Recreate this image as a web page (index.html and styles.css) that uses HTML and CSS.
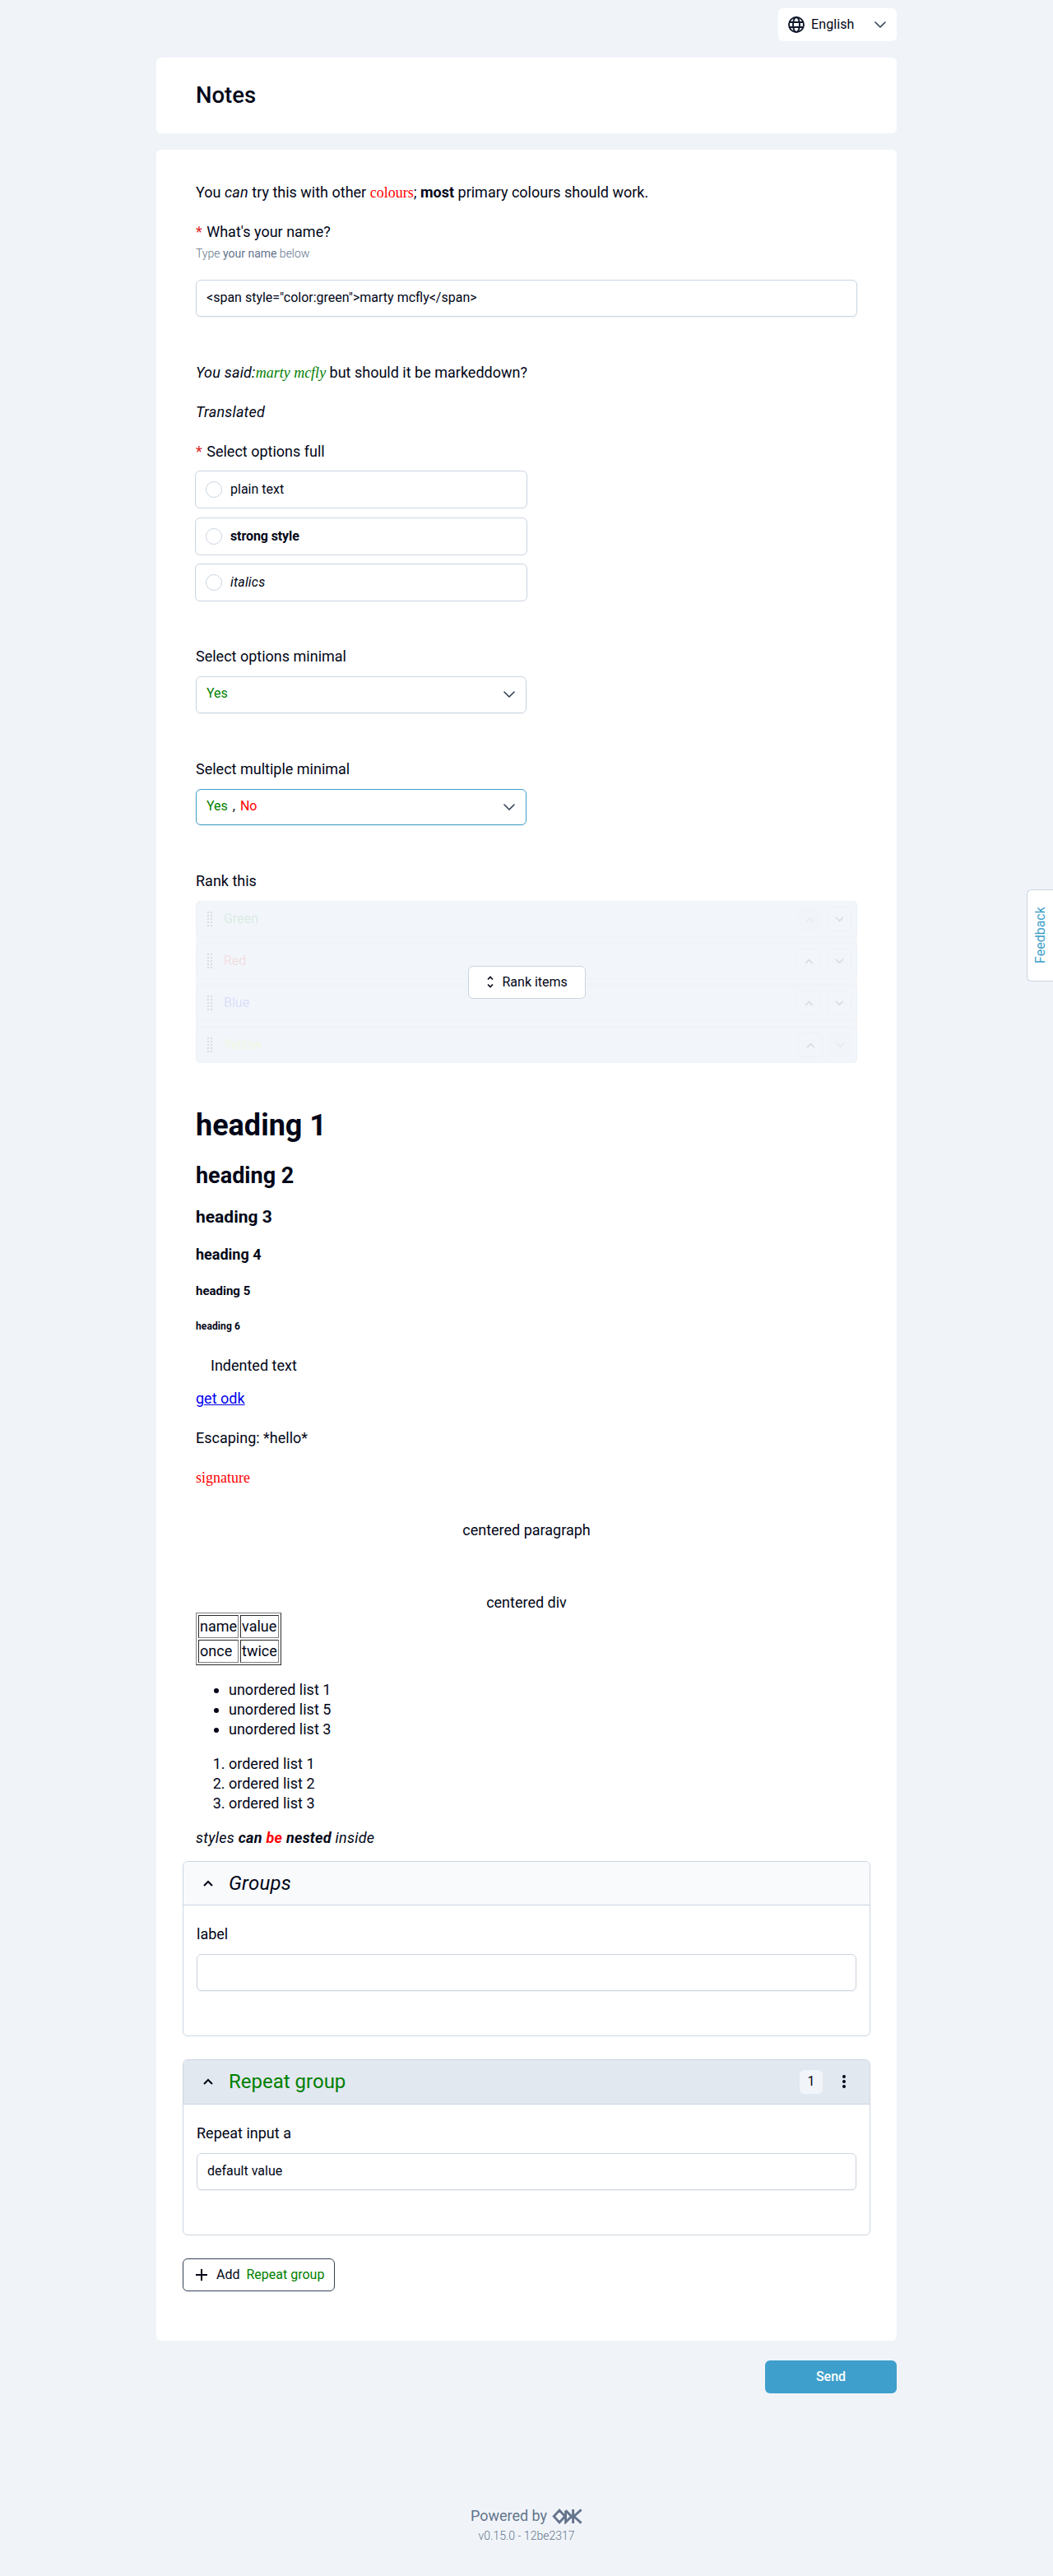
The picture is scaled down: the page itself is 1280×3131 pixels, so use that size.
FILE: index.html
```html
<!DOCTYPE html>
<html lang="en">
<head>
<meta charset="utf-8">
<title>Notes</title>
<link rel="stylesheet" href="styles.css">
</head>
<body>
<svg class="defs" width="0" height="0">
  <symbol id="down" viewBox="0 0 14 8"><path d="M1 1l6 6 6-6" fill="none" stroke="currentColor" stroke-width="1.6" stroke-linecap="round" stroke-linejoin="round"/></symbol>
  <symbol id="up" viewBox="0 0 12 8"><path d="M1 7l5-5 5 5" fill="none" stroke="currentColor" stroke-width="2"/></symbol>
  <symbol id="dn" viewBox="0 0 12 8"><path d="M1 1l5 5 5-5" fill="none" stroke="currentColor" stroke-width="2"/></symbol>
  <symbol id="grip" viewBox="0 0 6 18"><path d="M1 0v18M5 0v18" stroke="currentColor" stroke-width="2" stroke-dasharray="2 2"/></symbol>
</svg>
<div class="page">
  <div class="language">
    <svg class="globe" viewBox="0 0 20 20" fill="none" stroke="currentColor" stroke-width="1.9"><circle cx="10" cy="10" r="9"/><ellipse cx="10" cy="10" rx="4" ry="9"/><path d="M1.7 7h16.6M1.7 13h16.6"/></svg>
    <span>English</span>
    <svg class="chev"><use href="#down"/></svg>
  </div>
  <header class="card title"><h1>Notes</h1></header>
  <main class="card form">
    <p class="line">You <em>can</em> try this with other <span class="serif red">colours</span>; <strong>most</strong> primary colours should work.</p>
    <label class="line gap"><span class="req">*</span> What's your name?</label>
    <p class="hint">Type <b>your name</b> below</p>
    <div class="input first">&lt;span style="color:green"&gt;marty mcfly&lt;/span&gt;</div>
    <p class="line said"><em>You said:<span class="serif green">marty mcfly</span></em> but should it be markeddown?</p>
    <p class="line gap"><em>Translated</em></p>
    <label class="line gap"><span class="req">*</span> Select options full</label>
    <div class="options">
      <div class="option"><i class="radio"></i><span>plain text</span></div>
      <div class="option"><i class="radio"></i><strong>strong style</strong></div>
      <div class="option"><i class="radio"></i><em>italics</em></div>
    </div>
    <label class="line question after-options">Select options minimal</label>
    <div class="select"><span class="green">Yes</span><svg class="chev"><use href="#down"/></svg></div>
    <label class="line question">Select multiple minimal</label>
    <div class="select active"><span><span class="green">Yes</span> <span class="comma">,</span> <span class="red">No</span></span><svg class="chev"><use href="#down"/></svg></div>
    <label class="line question">Rank this</label>
    <div class="rank">
      <div class="row"><svg class="grip"><use href="#grip"/></svg><span class="green">Green</span><b class="off"><svg><use href="#up"/></svg></b><b><svg><use href="#dn"/></svg></b></div>
      <div class="row"><svg class="grip"><use href="#grip"/></svg><span class="red">Red</span><b><svg><use href="#up"/></svg></b><b><svg><use href="#dn"/></svg></b></div>
      <div class="row"><svg class="grip"><use href="#grip"/></svg><span class="blue">Blue</span><b><svg><use href="#up"/></svg></b><b><svg><use href="#dn"/></svg></b></div>
      <div class="row"><svg class="grip"><use href="#grip"/></svg><span class="yellow">Yellow</span><b><svg><use href="#up"/></svg></b><b class="off"><svg><use href="#dn"/></svg></b></div>
      <div class="overlay"><button class="rank-btn"><svg viewBox="0 0 8 15" fill="none" stroke="currentColor" stroke-width="1.6"><path d="M1 4.500l3-3 3 3M1 10.500l3 3 3-3"/></svg>Rank items</button></div>
    </div>
    <div class="markdown">
      <h1>heading 1</h1>
      <h2>heading 2</h2>
      <h3>heading 3</h3>
      <h4>heading 4</h4>
      <h5>heading 5</h5>
      <h6>heading 6</h6>
      <p class="indent">Indented text</p>
      <p class="link"><a href="#">get odk</a></p>
      <p class="gap">Escaping: *hello*</p>
      <p class="gap serif red">signature</p>
      <p class="center para">centered paragraph</p>
      <div class="center box">centered div</div>
      <table border="1"><tr><td>name</td><td>value</td></tr><tr><td>once</td><td>twice</td></tr></table>
      <ul><li>unordered list 1</li><li>unordered list 5</li><li>unordered list 3</li></ul>
      <ol><li>ordered list 1</li><li>ordered list 2</li><li>ordered list 3</li></ol>
      <p class="nested"><em>styles <strong>can <span class="red">be</span> nested</strong> inside</em></p>
    </div>
    <section class="group">
      <div class="group-head"><svg><use href="#up"/></svg><em>Groups</em></div>
      <div class="group-body"><label class="line">label</label><div class="input"></div></div>
    </section>
    <section class="group repeat">
      <div class="group-head"><svg><use href="#up"/></svg><span class="green">Repeat group</span><span class="count">1</span><svg class="dots" viewBox="0 0 4 16" fill="currentColor"><circle cx="2" cy="2" r="2"/><circle cx="2" cy="8" r="2"/><circle cx="2" cy="14" r="2"/></svg></div>
      <div class="group-body"><label class="line">Repeat input a</label><div class="input">default value</div></div>
    </section>
    <button class="add"><svg viewBox="0 0 14 14" stroke="currentColor" stroke-width="2"><path d="M7 0v14M0 7h14"/></svg><span>Add</span><span class="green">Repeat group</span></button>
  </main>
  <div class="actions"><button class="send">Send</button></div>
  <footer>
    <div class="powered">Powered by <svg viewBox="0 0 38 20" fill="none" stroke="currentColor" stroke-width="3"><path d="M9 2.200L1.900 10 9 17.800 16.100 10zM17 2.500v15L24.500 10 17 2.500M26.500 1v18M37 1.500L27.500 10l9.500 8.500"/></svg></div>
    <div class="version">v0.15.0 - 12be2317</div>
  </footer>
</div>
<div class="feedback">Feedback</div>
</body>
</html>
```
FILE: styles.css
```css
* { box-sizing: border-box; }
body { margin: 0; background: #f0f4f9; color: #020617; font: 16px/24px Roboto, sans-serif; min-height: 3131px; }
h1, h2, h3, h4, h5, h6, p { margin: 0; }
button { font: inherit; color: inherit; }
.defs { display: block; position: absolute; }
.page { width: 900px; margin: 0 auto; padding-top: 10px; display: flex; flex-direction: column; }
.red { color: red; }
.green { color: green; }
.blue { color: blue; }
.yellow { color: yellow; }
.serif { font-family: "Liberation Serif", serif; letter-spacing: 0; }
strong { font-weight: 700; }
em { letter-spacing: .2px; }
.option strong { letter-spacing: -.1px; }
.language { align-self: flex-end; width: 144px; height: 40px; background: #fff; border-radius: 6px; display: flex; align-items: center; padding: 0 13px 0 12px; }
.globe { width: 20px; height: 20px; margin-right: 8px; color: #0f172a; }
.language span { letter-spacing: .1px; }
.chev { width: 14px; height: 8px; margin-left: auto; color: #334155; }
.card { background: #fff; border-radius: 6px; }
.title { height: 92px; margin-top: 20px; padding: 30px 48px; }
.title h1 { font-size: 27.500px; font-weight: 500; line-height: 32px; }
.form { height: 2663px; margin-top: 20px; padding: 40px 32px 0; }
.form > * { margin-left: 16px; margin-right: 16px; }
.line { display: block; font-size: 18px; line-height: 24px; }
.gap { margin-top: 24px; }
.req { color: #dc2626; margin-right: 1px; }
.hint { font-size: 14px; font-weight: 300; line-height: 20px; margin-top: 4px; color: #64748b; }
.hint b { font-weight: 400; }
.input { height: 44.500px; border: 1px solid #cbd5e1; border-radius: 6px; padding: 0 12px; line-height: 42px; box-shadow: 0 1px 2px rgba(18, 18, 23, .05); background: #fff; }
.input.first { margin-top: 22px; }
.said { margin-top: 56.500px; }
.options { display: flex; flex-direction: column; gap: 10.500px; margin: 11px auto 0 15px !important; width: 404px; }
.option { height: 46px; border: 1px solid #cbd5e1; border-radius: 6px; display: flex; align-items: center; padding-left: 12px; gap: 10px; }
.radio { width: 20px; height: 20px; border: 1px solid #cbd5e1; border-radius: 50%; }
.question { margin-top: 56px; }
.after-options { margin-top: 55px; }
.select { width: 402px; height: 44.500px; margin-top: 12px; border: 1px solid #cbd5e1; border-radius: 6px; display: flex; align-items: center; padding: 0 13px 2px 12px; box-shadow: 0 1px 2px rgba(18, 18, 23, .05); }
.select .chev { position: relative; top: 1px; }
.select.active { border-color: #3e9fcc; }
.comma { margin: 0 2px; }
.rank { position: relative; margin-top: 12px; height: 197px; display: flex; flex-direction: column; gap: 7px; }
.row { height: 44px; border: 1px solid #cbd5e1; border-radius: 6px; display: flex; align-items: center; gap: 7px; padding: 0 6px 0 13px; }
.row span { margin: 0 auto 0 7px; }
.grip { width: 6px; height: 18px; color: #000; }
.row b { width: 30px; height: 30px; border: 1px solid #cbd5e1; border-radius: 6px; display: flex; align-items: center; justify-content: center; }
.row b svg { width: 11px; height: 7px; }
.row b.off { width: 28px; opacity: .4; border-color: transparent; background: #e2e8f0; }
.overlay { position: absolute; inset: 0; background: rgba(241, 245, 249, .9); border-radius: 6px; display: flex; align-items: center; justify-content: center; }
.rank-btn { width: 143px; height: 40px; border: 1px solid #cbd5e1; border-radius: 6px; background: #fff; display: flex; align-items: center; gap: 11px; padding: 0 0 0 22px; }
.rank-btn svg { width: 8px; height: 15px; }
.markdown { font-size: 18px; padding-top: 55px; }
.markdown h1 { font-size: 36px; line-height: 42px; }
.markdown h2 { font-size: 27px; line-height: 32px; margin-top: 24px; }
.markdown h3 { font-size: 21px; line-height: 26px; margin-top: 21px; }
.markdown h4 { font-size: 18px; line-height: 24px; margin-top: 21px; }
.markdown h5 { font-size: 15px; line-height: 18px; margin-top: 23px; }
.markdown h6 { font-size: 12px; line-height: 14px; margin-top: 27px; letter-spacing: .1px; }
.indent { margin-top: 29px; padding-left: 18px; }
.link { margin-top: 16px; }
.link a { color: #00e; }
.center { text-align: center; }
.para { margin-top: 40px; }
.box { margin-top: 64px; }
.markdown table { color: inherit; border-color: #808080; }
.markdown td { padding: 1px; }
.markdown ul, .markdown ol { margin: 18px 0 0; padding-left: 40px; }
.nested { margin-top: 18px; }
.nested em { letter-spacing: .26px; }
.group { margin: 16px 0 0; height: 213px; border: 1px solid #cbd5e1; border-radius: 6px; overflow: hidden; }
.group-head { height: 53px; background: #f8fafc; border-bottom: 1px solid #cbd5e1; display: flex; align-items: center; font-size: 24px; padding: 0 29px 1px 24px; }
.group-head > svg:first-child { width: 12px; height: 8px; margin-right: 19px; }
.group-body { padding: 23px 16px; }
.group-body .input { margin-top: 12px; }
.repeat { margin-top: 28px; height: 214px; }
.repeat .group-head { background: #e2e8f0; height: 54px; }
.count { margin-left: auto; width: 28px; height: 29px; line-height: 28px; text-align: center; font-size: 16px; background: #f1f5f9; border-radius: 6px; }
.dots { width: 4px; height: 16px; margin-left: 24px; }
.add { margin: 28px 0 0 !important; width: 185px; height: 40px; border: 1px solid #334155; border-radius: 6px; background: #fff; display: flex; align-items: center; padding: 0 0 0 15px; }
.add svg { width: 14px; height: 14px; margin-right: 11px; }
.add .green { margin-left: 8px; }
.actions { display: flex; justify-content: flex-end; padding-top: 24px; }
.send { width: 160px; height: 40px; border: 0; border-radius: 6px; background: #3e9fcc; color: #fff; font-weight: 500; padding: 0; }
footer { margin-top: 137px; text-align: center; color: #64748b; }
.powered { font-size: 18px; line-height: 24px; display: flex; justify-content: center; align-items: center; gap: 6px; }
.powered svg { width: 37px; height: 19px; }
.version { font-size: 14px; line-height: 20px; font-weight: 300; margin-top: 2px; }
.feedback { position: absolute; right: 0; top: 1081px; width: 32px; height: 112px; writing-mode: vertical-rl; transform: rotate(180deg); text-align: center; line-height: 31px; background: #fff; border: 1px solid #cbd5e1; border-left: 0; border-radius: 0 6px 6px 0; color: #3e9fcc; }
```
